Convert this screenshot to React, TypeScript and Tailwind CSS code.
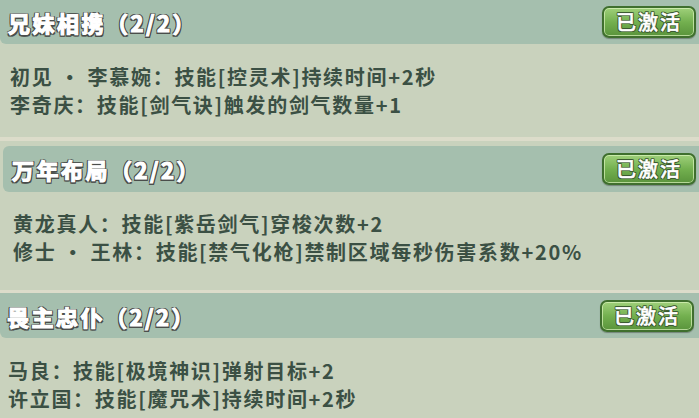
import React from "react";

const FONT = { fontFamily: '"Noto Sans CJK SC", "Noto Sans", sans-serif' };

function Badge() {
  return (
    <div className="flex h-[32px] w-[94px] items-center justify-center rounded-[7px] border-2 border-[#3f6f2e] bg-gradient-to-b from-[#9fd07a] via-[#73b04f] to-[#5a943c] shadow-[inset_0_0_0_1px_rgba(220,245,190,0.7),0_1px_1px_rgba(0,0,0,0.3)]">
      <span className="text-[20px] font-medium leading-none tracking-[2px] text-white [-webkit-text-stroke:0.5px_#ffffff] [text-shadow:1px_0_0_#3c5a30,-1px_0_0_#3c5a30,0_1px_0_#3c5a30,0_-1px_0_#3c5a30,1px_1px_0_#3c5a30,-1px_-1px_0_#3c5a30,1px_-1px_0_#3c5a30,-1px_1px_0_#3c5a30]">
        已激活
      </span>
    </div>
  );
}

function Header({ title, h, pl, extra }: { title: string; h: string; pl: string; extra: string }) {
  return (
    <div className={`flex items-center justify-between bg-[#a5bfae] ${h} ${pl} ${extra} pr-[3px]`}>
      <span className="text-[22px] font-bold leading-none tracking-[2.5px] text-white [-webkit-text-stroke:1.2px_#ffffff] [text-shadow:1.5px_0_0_#4a4d4b,-1.5px_0_0_#4a4d4b,0_1.5px_0_#4a4d4b,0_-1.5px_0_#4a4d4b,1.5px_1.5px_0_#4a4d4b,-1.5px_-1.5px_0_#4a4d4b,1.5px_-1.5px_0_#4a4d4b,-1.5px_1.5px_0_#4a4d4b]">
        {title}
      </span>
      <Badge />
    </div>
  );
}

function Lines({ lines, cls }: { lines: string[]; cls: string }) {
  return (
    <div className={`flex flex-col ${cls}`}>
      {lines.map((l) => (
        <div key={l} className="h-[28px] text-[20px] font-bold leading-[28px] tracking-[1.7px] text-[#3b5044] whitespace-nowrap">
          {l}
        </div>
      ))}
    </div>
  );
}

export default function App() {
  return (
    <div className="h-[418px] w-[699px] overflow-hidden bg-[#c9d2bd]" style={FONT}>
      <Header title="兄妹相携（2/2）" h="h-[44px]" pl="pl-[8px]" extra="rounded-bl-[6px]" />
      <Lines cls="h-[93px] pt-[19px] pl-[10px]" lines={["初见 · 李慕婉：技能[控灵术]持续时间+2秒", "李奇庆：技能[剑气诀]触发的剑气数量+1"]} />
      <div className="h-[4px] bg-[#dcdcca]" />
      <div className="pl-[3px] pt-[5px]">
        <Header title="万年布局（2/2）" h="h-[46px]" pl="pl-[9px]" extra="rounded-l-[6px]" />
      </div>
      <Lines cls="h-[98px] pt-[18px] pl-[13px]" lines={["黄龙真人：技能[紫岳剑气]穿梭次数+2", "修士 · 王林：技能[禁气化枪]禁制区域每秒伤害系数+20%"]} />
      <div className="h-[3px] bg-[#dcdcca]" />
      <Header title="畏主忠仆（2/2）" h="h-[45px]" pl="pl-[7px]" extra="rounded-bl-[6px] pr-[5px]" />
      <Lines cls="pt-[19px] pl-[8px]" lines={["马良：技能[极境神识]弹射目标+2", "许立国：技能[魔咒术]持续时间+2秒"]} />
    </div>
  );
}
